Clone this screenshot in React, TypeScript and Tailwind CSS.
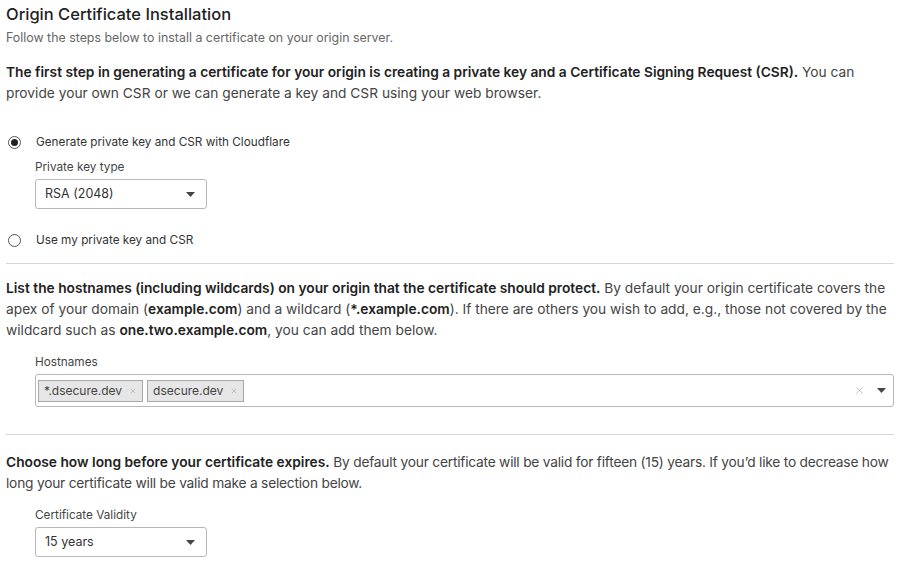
import { X } from "lucide-react";

function Caret() {
  return (
    <svg width="9" height="5" viewBox="0 0 9 5" className="shrink-0">
      <path d="M0 0h9L4.5 5z" fill="#444" />
    </svg>
  );
}

function Radio({ checked }: { checked?: boolean }) {
  return (
    <span className="flex h-[13px] w-[13px] shrink-0 items-center justify-center rounded-full border border-[#555] bg-white">
      {checked && <span className="h-[7px] w-[7px] rounded-full bg-[#222]" />}
    </span>
  );
}

function Select({ value }: { value: string }) {
  return (
    <div className="flex h-[30px] w-[172px] items-center justify-between rounded-[3px] border border-[#b8b8b8] bg-white pl-[9px] pr-[11px] text-[12.5px] text-[#333]">
      <span>{value}</span>
      <Caret />
    </div>
  );
}

function Tag({ label }: { label: string }) {
  return (
    <span className="flex h-[22px] items-center gap-[7px] border border-[#a8a8a8] bg-[#e6e6e6] px-[5px] text-[12px] text-[#444]">
      {label}
      <X size={8} strokeWidth={1.5} className="text-[#9a9a9a]" />
    </span>
  );
}

export default function App() {
  return (
    <div className="min-h-screen bg-white pl-[6px] pr-[10px] pt-[4px] font-['Inter',sans-serif] text-[#333] antialiased">
      <h1 className="text-[16.5px] font-medium leading-[20px] text-[#222]">
        Origin Certificate Installation
      </h1>
      <p className="mt-[5px] text-[12.4px] leading-[18px] text-[#666]">
        Follow the steps below to install a certificate on your origin server.
      </p>

      <p className="mt-[15px] text-[13.75px] leading-[21px] text-[#444]">
        <strong className="font-semibold text-[#222]">
          The first step in generating a certificate for your origin is creating a private key and a Certificate
          Signing Request (CSR).
        </strong>{" "}
        You can provide your own CSR or we can generate a key and CSR using your web browser.
      </p>

      <div className="mt-[29px] flex flex-col">
        <label className="flex items-center gap-[15px] pl-[2px] text-[11.75px] leading-[18px] text-[#333]">
          <Radio checked />
          Generate private key and CSR with Cloudflare
        </label>
        <div className="mt-[7px] pl-[29px]">
          <div className="text-[11.75px] leading-[18px] text-[#444]">Private key type</div>
          <div className="mt-[3px]">
            <Select value="RSA (2048)" />
          </div>
        </div>
        <label className="mt-[22px] flex items-center gap-[15px] pl-[2px] text-[11.75px] leading-[18px] text-[#333]">
          <Radio />
          Use my private key and CSR
        </label>
      </div>

      <hr className="mt-[14px] border-t border-[#d6d6d6]" />

      <p className="mt-[14px] text-[13.75px] leading-[21px] text-[#444]">
        <strong className="font-semibold text-[#222]">
          List the hostnames (including wildcards) on your origin that the certificate should protect.
        </strong>{" "}
        By default your origin certificate covers the apex of your domain (
        <strong className="font-semibold text-[#222]">example.com</strong>) and a wildcard (
        <strong className="font-semibold text-[#222]">*.example.com</strong>). If there are others you wish to add,
        e.g., those not covered by the wildcard such as{" "}
        <strong className="font-semibold text-[#222]">one.two.example.com</strong>, you can add them below.
      </p>

      <div className="mt-[12px] pl-[29px]">
        <div className="text-[11.75px] leading-[18px] text-[#444]">Hostnames</div>
        <div className="mt-[3px] flex h-[33px] items-center rounded-[3px] border border-[#b8b8b8] bg-white pl-[2px] pr-[7px]">
          <div className="flex flex-1 items-center gap-[4px]">
            <Tag label="*.dsecure.dev" />
            <Tag label="dsecure.dev" />
          </div>
          <X size={11} strokeWidth={1.3} className="mr-[12px] text-[#999]" />
          <Caret />
        </div>
      </div>

      <hr className="mt-[27px] border-t border-[#d6d6d6]" />

      <p className="mt-[17px] text-[13.75px] leading-[21px] tracking-[-0.22px] text-[#444]">
        <strong className="font-semibold tracking-normal text-[#222]">
          Choose how long before your certificate expires.
        </strong>{" "}
        By default your certificate will be valid for fifteen (15) years. If you’d like to decrease how long your
        certificate will be valid make a selection below.
      </p>

      <div className="mt-[12px] pl-[29px]">
        <div className="text-[11.75px] leading-[18px] text-[#444]">Certificate Validity</div>
        <div className="mt-[3px]">
          <Select value="15 years" />
        </div>
      </div>
    </div>
  );
}
